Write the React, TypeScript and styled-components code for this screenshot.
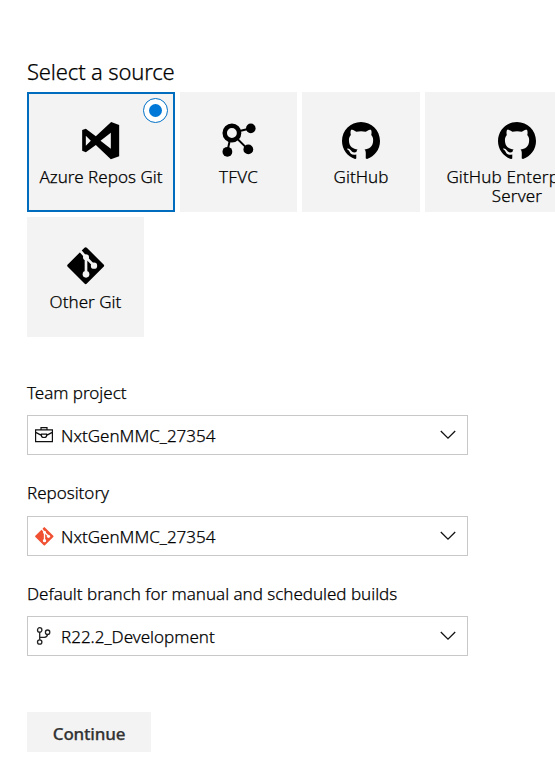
import React from 'react';
import styled, { createGlobalStyle } from 'styled-components';

const GlobalStyle = createGlobalStyle`
  * { box-sizing: border-box; }
  html, body { margin: 0; background: #fff; overflow: hidden; }
  body {
    font-family: 'Noto Sans', 'Open Sans', sans-serif;
    font-size: 17px;
    font-weight: 300;
    -webkit-text-stroke: 0.25px currentColor;
    color: #000;
  }
`;

const Page = styled.main`
  width: 555px;
  height: 784px;
  padding: 57px 0 0 27px;
  overflow: hidden;
`;

const Heading = styled.h1`
  margin: 0 0 7px;
  font-size: 22px;
  line-height: 28px;
  font-weight: 300;
  letter-spacing: -0.15px;
`;

const TileGrid = styled.div`
  display: flex;
  flex-direction: column;
  gap: 5px;
`;

const TileRow = styled.div`
  display: flex;
  gap: 5px;
`;

const Tile = styled.button<{ $width: number; $selected?: boolean }>`
  position: relative;
  display: flex;
  flex: none;
  flex-direction: column;
  align-items: center;
  width: ${(p) => p.$width}px;
  height: 120px;
  padding: 28px 0 0;
  border: 2px solid ${(p) => (p.$selected ? '#006cbe' : 'transparent')};
  background: #f3f3f3;
  color: #000;
  font: inherit;

  > svg {
    width: 38px;
    height: 38px;
  }
`;

const TileLabel = styled.span<{ $spacing?: number }>`
  margin-top: 7px;
  line-height: 19px;
  text-align: center;
  white-space: pre-line;
  letter-spacing: ${(p) => p.$spacing ?? 0.03}px;
`;

const Radio = styled.span`
  position: absolute;
  top: 4px;
  right: 5px;
  display: grid;
  place-items: center;
  width: 25px;
  height: 25px;
  border: 1px solid #0070c6;
  border-radius: 50%;
  background: #fff;

  &::after {
    content: '';
    width: 13px;
    height: 13px;
    border-radius: 50%;
    background: #0078d7;
  }
`;

const Form = styled.form`
  display: flex;
  flex-direction: column;
  align-items: flex-start;
  padding-top: 44px;
`;

const Field = styled.div<{ $gap: number }>`
  width: 441px;
  margin-bottom: ${(p) => p.$gap}px;
`;

const FieldLabel = styled.div<{ $height: number }>`
  height: ${(p) => p.$height}px;
  line-height: 24px;
  letter-spacing: -0.02px;
`;

const Select = styled.div`
  display: flex;
  align-items: center;
  height: 40px;
  padding: 0 11px 0 7px;
  border: 1px solid #c8c8c8;
  background: #fff;
`;

const SelectIcon = styled.span<{ $color?: string }>`
  display: flex;
  width: 26px;
  color: ${(p) => p.$color ?? '#000'};
`;

const SelectValue = styled.span`
  flex: 1;
  padding-top: 1px;
  line-height: 25px;
`;

const ContinueButton = styled.button`
  width: 124px;
  height: 40px;
  margin-top: 22px;
  padding: 3px 0 0;
  border: 0;
  background: #f3f3f3;
  color: #333;
  font: 500 17px/24px 'Noto Sans', 'Open Sans', sans-serif;
  letter-spacing: -0.2px;
`;

const AzureReposIcon = () => (
  <svg viewBox="0 0 113 114">
    <path
      fillRule="evenodd"
      d="M0 24L11 20L41 43L87 0L111 9V103L86 112L41 69L11 91L0 86ZM11 41V71L26 56ZM86 32V80L55 56Z"
    />
  </svg>
);

const TfvcIcon = () => (
  <svg viewBox="0 0 38 38" stroke="#000" fill="none">
    <path strokeWidth="2" d="M11.5 11L31 6.2M11.5 11L28 27.4M11.5 11L7.2 30" />
    <circle cx="11.9" cy="11" r="7.2" strokeWidth="4.5" fill="#f3f3f3" />
    <g fill="#000" stroke="none">
      <circle cx="30.8" cy="6.4" r="4.8" />
      <circle cx="28.3" cy="27.4" r="4.9" />
      <circle cx="7.4" cy="29.8" r="4.9" />
    </g>
  </svg>
);

const GitHubIcon = () => (
  <svg viewBox="0 0 16 16">
    <path d="M8 0C3.58 0 0 3.58 0 8c0 3.54 2.29 6.53 5.47 7.59.4.07.55-.17.55-.38 0-.19-.01-.82-.01-1.49-2.01.37-2.53-.49-2.69-.94-.09-.23-.48-.94-.82-1.13-.28-.15-.68-.52-.01-.53.63-.01 1.08.58 1.23.82.72 1.21 1.87.87 2.33.66.07-.52.28-.87.51-1.07-1.78-.2-3.64-.89-3.64-3.95 0-.87.31-1.59.82-2.15-.08-.2-.36-1.02.08-2.12 0 0 .67-.21 2.2.82.64-.18 1.32-.27 2-.27s1.36.09 2 .27c1.53-1.04 2.2-.82 2.2-.82.44 1.1.16 1.92.08 2.12.51.56.82 1.27.82 2.15 0 3.07-1.87 3.75-3.65 3.95.29.25.54.73.54 1.48 0 1.07-.01 1.93-.01 2.2 0 .21.15.46.55.38A8.01 8.01 0 0 0 16 8c0-4.42-3.58-8-8-8z" />
  </svg>
);

const GitIcon = ({ size = 38, line = '#f3f3f3' }: { size?: number; line?: string }) => (
  <svg width={size} height={size} viewBox="0 0 114 114">
    <rect x="15.5" y="15.5" width="81" height="81" rx="5" transform="rotate(45 56 56)" fill="currentColor" />
    <path d="M36 7L57 31V82M57 31L81 56" fill="none" stroke={line} strokeWidth="8" />
    <g fill={line}>
      <circle cx="57" cy="31" r="9" />
      <circle cx="57" cy="82" r="10" />
      <circle cx="81" cy="56" r="9.5" />
    </g>
  </svg>
);

const BriefcaseIcon = () => (
  <svg width="18" height="18" viewBox="0 0 18 18" fill="none" stroke="#111" strokeWidth="1.2">
    <path d="M.6 3.9H17.4V15.6H.6ZM6 4V1.6H12V4M.8 6.4L6.4 9.4M17.2 6.4L11.6 9.4M6.4 8.2H11.6V9.5C11.6 10.6 10.5 11.5 9 11.5S6.4 10.6 6.4 9.5Z" />
  </svg>
);

const BranchIcon = () => (
  <svg width="18" height="18" viewBox="0 0 18 18" fill="none" stroke="#222" strokeWidth="1.3">
    <circle cx="4.7" cy="2.9" r="2.2" />
    <circle cx="4.7" cy="15" r="2.2" />
    <circle cx="12.6" cy="5.2" r="2.2" />
    <path d="M4.7 5.1V12.8M12.5 7.4C12.3 9.2 11.3 10.3 9.4 10.3H4.7" />
  </svg>
);

const Chevron = () => (
  <svg width="16" height="10" viewBox="0 0 16 10" fill="none" stroke="#111" strokeWidth="1.3">
    <path d="M.8 1L8 8.2L15.2 1" />
  </svg>
);

interface SelectFieldProps {
  label: string;
  value: string;
  icon: React.ReactNode;
  gap: number;
  labelHeight?: number;
  iconColor?: string;
}

const SelectField = ({ label, value, icon, gap, labelHeight = 34, iconColor }: SelectFieldProps) => (
  <Field $gap={gap}>
    <FieldLabel $height={labelHeight}>{label}</FieldLabel>
    <Select>
      <SelectIcon $color={iconColor}>{icon}</SelectIcon>
      <SelectValue>{value}</SelectValue>
      <Chevron />
    </Select>
  </Field>
);

export default function App() {
  return (
    <>
      <GlobalStyle />
      <Page>
        <Heading>Select a source</Heading>
        <TileGrid>
          <TileRow>
            <Tile $width={148} $selected>
              <AzureReposIcon />
              <TileLabel>Azure Repos Git</TileLabel>
              <Radio />
            </Tile>
            <Tile $width={117}>
              <TfvcIcon />
              <TileLabel $spacing={0.3}>TFVC</TileLabel>
            </Tile>
            <Tile $width={118}>
              <GitHubIcon />
              <TileLabel>GitHub</TileLabel>
            </Tile>
            <Tile $width={184}>
              <GitHubIcon />
              <TileLabel $spacing={0.15}>{'GitHub Enterprise\nServer'}</TileLabel>
            </Tile>
          </TileRow>
          <TileRow>
            <Tile $width={117}>
              <GitIcon />
              <TileLabel>Other Git</TileLabel>
            </Tile>
          </TileRow>
        </TileGrid>
        <Form>
          <SelectField label="Team project" value="NxtGenMMC_27354" icon={<BriefcaseIcon />} gap={26} />
          <SelectField
            label="Repository"
            value="NxtGenMMC_27354"
            icon={<GitIcon size={19} line="#fff" />}
            iconColor="#f05133"
            labelHeight={35}
            gap={26}
          />
          <SelectField
            label="Default branch for manual and scheduled builds"
            value="R22.2_Development"
            icon={<BranchIcon />}
            gap={34}
          />
          <ContinueButton type="button">Continue</ContinueButton>
        </Form>
      </Page>
    </>
  );
}
